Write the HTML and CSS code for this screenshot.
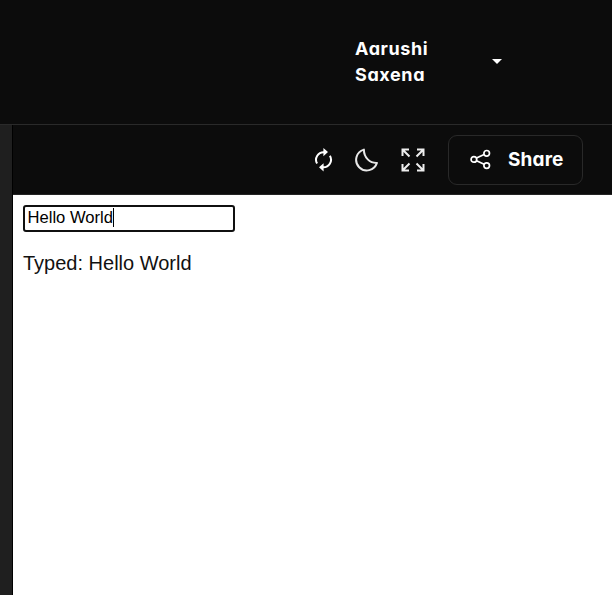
FILE: index.html
```html
<!DOCTYPE html>
<html lang="en">
<head>
<meta charset="utf-8">
<title>Preview</title>
<link rel="stylesheet" href="styles.css">
</head>
<body>
<header class="header">
  <div class="user"><span class="first">Aarushi</span><span class="last">Saxena</span></div>
  <svg class="caret" width="10" height="5" viewBox="0 0 10 5"><path d="M0 0h10L5 5z" fill="#fff"/></svg>
</header>
<div class="workspace">
  <div class="gutter"></div>
  <main class="panel">
    <div class="toolbar">
      <svg class="refresh" width="19" height="24" viewBox="0 0 19 24" fill="none" stroke="#fff" stroke-width="2"><path d="M3.1 15.6A7.6 7.6 0 0 1 10.3 4.2M15.9 7.8A7.6 7.6 0 0 1 8.7 19.3"/><path d="M9.4 0v8.2L14 4.1zM9.6 15.2v8.2L5 19.3z" fill="#fff" stroke="none"/></svg>
      <svg class="moon" width="24" height="24" viewBox="0 0 24 24" fill="none" stroke="#e8e8e8" stroke-width="2" stroke-linejoin="round"><path d="M8.9 1.6A10.6 10.6 0 1 0 21.9 14.9C14.9 15.2 8.8 9.6 8.9 1.6z"/></svg>
      <svg class="expand" width="24" height="24" viewBox="0 0 24 24" fill="none" stroke="#eee" stroke-width="2"><path d="M1.5 8V1.5H8M1.5 1.5l7 7M16 1.5h6.5V8M22.5 1.5l-7 7M1.5 16v6.5H8M1.5 22.5l7-7M16 22.5h6.5V16M22.5 22.5l-7-7"/></svg>
      <button class="share">
        <svg width="21" height="21" viewBox="0 0 21 21" fill="none" stroke="#fff" stroke-width="1.7"><circle cx="3.9" cy="10.4" r="2.8"/><circle cx="16.7" cy="4.3" r="2.8"/><circle cx="16.7" cy="16.6" r="2.8"/><path d="M6.5 9.1l7.6-3.6M6.5 11.7l7.6 3.6"/></svg>
        <span class="share-label">Share</span>
      </button>
    </div>
    <section class="preview">
      <div class="field"><span class="value">Hello World</span><span class="cursor"></span></div>
      <p class="typed">Typed: Hello World</p>
    </section>
  </main>
</div>
</body>
</html>
```
FILE: styles.css
```css
* { box-sizing: border-box; }
body {
  margin: 0;
  height: 595px;
  overflow: hidden;
  display: flex;
  flex-direction: column;
  background: #0c0c0c;
  color: #fff;
  font-family: Inter, sans-serif;
  font-feature-settings: "cv11";
}
svg { display: block; flex: none; }
.header {
  height: 125px;
  flex: none;
  display: flex;
  align-items: center;
  padding-left: 355px;
  border-bottom: 1px solid #2a2a2a;
}
.user {
  width: 137px;
  display: flex;
  flex-direction: column;
  font-size: 18px;
  font-weight: 650;
  line-height: 26px;
}
.caret { margin-bottom: 2px; }
.first { letter-spacing: 0.6px; }
.last { letter-spacing: 0.6px; }
.workspace { flex: 1; display: flex; }
.gutter { width: 13px; background: #1f1f1f; border-right: 1px solid #000; }
.panel { flex: 1; display: flex; flex-direction: column; }
.toolbar {
  height: 70px;
  display: flex;
  align-items: center;
  justify-content: flex-end;
  padding-right: 29px;
  border-bottom: 1px solid #242424;
}
.moon { margin-left: 22px; }
.expand { margin-left: 22px; }
.share {
  margin-left: 23px;
  width: 135px;
  height: 50px;
  padding: 0 0 0 21px;
  display: flex;
  align-items: center;
  gap: 17px;
  background: transparent;
  border: 1px solid #292929;
  border-radius: 9px;
  color: #fff;
  font: inherit;
  font-feature-settings: inherit;
}
.share-label { font-size: 19px; font-weight: 650; letter-spacing: 0.15px; }
.preview {
  flex: 1;
  padding: 10px;
  background: #fff;
  color: #111;
  font-family: "Liberation Sans", Arial, sans-serif;
}
.field {
  width: 212px;
  height: 27px;
  display: flex;
  align-items: center;
  padding: 0 3px 2px 2.5px;
  border: 2px solid #101010;
  border-radius: 3px;
  color: #000;
  font-size: 16.6px;
}
.cursor { width: 1px; height: 19px; background: #000; }
.typed { margin: 19px 0 0; font-size: 20px; line-height: 24px; }
```
